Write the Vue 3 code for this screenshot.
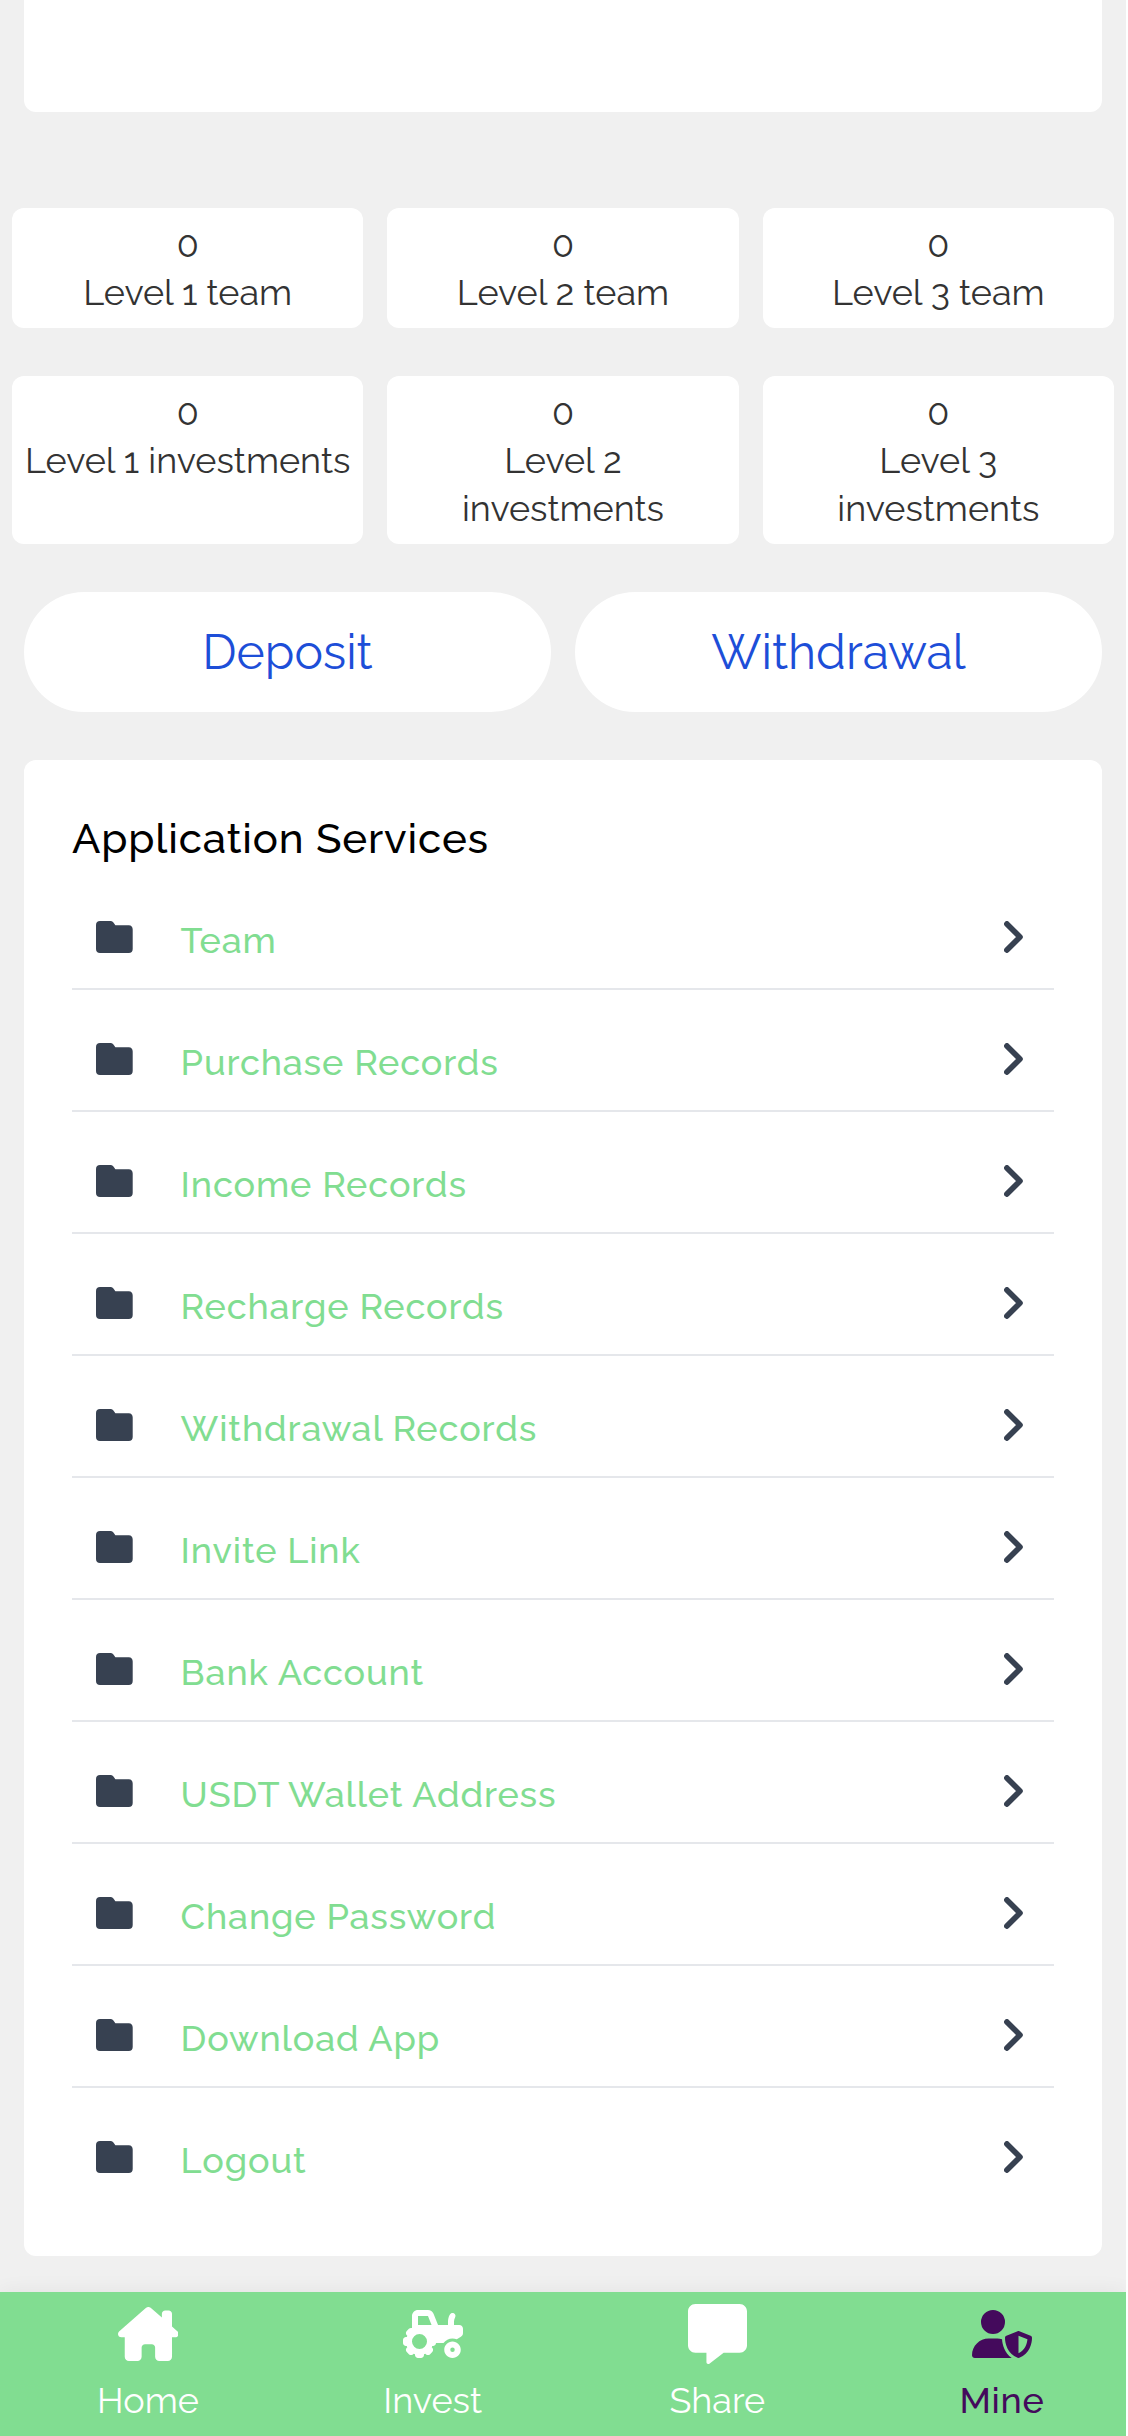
<script setup>
const stats = [
  [
    { value: 0, label: 'Level 1 team' },
    { value: 0, label: 'Level 2 team' },
    { value: 0, label: 'Level 3 team' },
  ],
  [
    { value: 0, label: 'Level 1 investments' },
    { value: 0, label: 'Level 2 investments' },
    { value: 0, label: 'Level 3 investments' },
  ],
]

const services = [
  'Team',
  'Purchase Records',
  'Income Records',
  'Recharge Records',
  'Withdrawal Records',
  'Invite Link',
  'Bank Account',
  'USDT Wallet Address',
  'Change Password',
  'Download App',
  'Logout',
]

const tabs = [
  {
    label: 'Home',
    box: '0 0 576 512',
    width: 60.75,
    height: 54,
    path: 'M543.8 287.6c17 0 32-14 32-32.1c1-9-3-17-11-24L512 185V64c0-17.7-14.3-32-32-32H448c-17.7 0-32 14.3-32 32v36.7L309.5 7c-6-5-14-7-21-7s-15 1-22 8L10 231.5c-7 7-10 15-10 24c0 18 14 32.1 32 32.1h32v69.7c-.1 .9-.1 1.8-.1 2.8V472c0 22.1 17.9 40 40 40h16c1.2 0 2.4-.1 3.6-.2c1.5 .1 3 .2 4.5 .2H160h24c22.1 0 40-17.9 40-40V448 384c0-17.7 14.3-32 32-32h64c17.7 0 32 14.3 32 32v64 24c0 22.1 17.9 40 40 40h24 32.5c1.4 0 2.8 0 4.2-.1c1.1 .1 2.2 .1 3.3 .1h16c22.1 0 40-17.9 40-40V455.8c.3-2.6 .5-5.3 .5-8.1l-.7-160.2h32z',
  },
  {
    label: 'Invest',
    box: '0 0 640 512',
    width: 60,
    height: 48,
    path: 'M96 64c0-35.3 28.7-64 64-64H266.3c26.2 0 49.7 15.9 59.4 40.2L373.7 160H480V126.2c0-24.8 5.8-49.3 16.9-71.6l2.5-5c7.9-15.8 27.1-22.2 42.9-14.3s22.2 27.1 14.3 42.9l-2.5 5c-6.7 13.3-10.1 28-10.1 42.9V160h56c22.1 0 40 17.9 40 40v45.4c0 16.5-8.5 31.9-22.6 40.7l-43.3 27.1c-14.2-5.9-29.8-9.2-46.1-9.2c-39.3 0-74.1 18.9-96 48H352c0 17.7-14.3 32-32 32h-8.2c-1.7 4.8-3.7 9.5-5.8 14.1l5.8 5.8c12.5 12.5 12.5 32.8 0 45.3l-22.6 22.6c-12.5 12.5-32.8 12.5-45.3 0l-5.8-5.8c-4.6 2.2-9.3 4.1-14.1 5.8V480c0 17.7-14.3 32-32 32H160c-17.7 0-32-14.3-32-32v-8.2c-4.8-1.7-9.5-3.7-14.1-5.8l-5.8 5.8c-12.5 12.5-32.8 12.5-45.3 0L40.2 449.1c-12.5-12.5-12.5-32.8 0-45.3l5.8-5.8c-2.2-4.6-4.1-9.3-5.8-14.1H32c-17.7 0-32-14.3-32-32V320c0-17.7 14.3-32 32-32h8.2c1.7-4.8 3.7-9.5 5.8-14.1l-5.8-5.8c-12.5-12.5-12.5-32.8 0-45.3l22.6-22.6c9-9 21.9-11.5 33.1-7.6V192 160 64zm170.3 0H160v96h32H304.7L266.3 64zM176 256a80 80 0 1 0 0 160 80 80 0 1 0 0-160zM528 448a24 24 0 1 0 0-48 24 24 0 1 0 0 48zm0 64c-48.6 0-88-39.4-88-88s39.4-88 88-88s88 39.4 88 88s-39.4 88-88 88z',
  },
  {
    label: 'Share',
    box: '0 0 512 512',
    width: 59,
    height: 60,
    path: 'M64 0C28.7 0 0 28.7 0 64V352c0 35.3 28.7 64 64 64h96v80c0 6.1 3.4 11.6 8.8 14.3s11.9 2.1 16.8-1.5L309.3 416H448c35.3 0 64-28.7 64-64V64c0-35.3-28.7-64-64-64H64z',
  },
  {
    label: 'Mine',
    box: '0 0 640 512',
    width: 60,
    height: 48,
    active: true,
    path: 'M224 256A128 128 0 1 0 224 0a128 128 0 1 0 0 256zm-45.7 48C79.8 304 0 383.8 0 482.3C0 498.7 13.3 512 29.7 512H418.3c1.8 0 3.5-.2 5.3-.5c-76.3-55.1-99.8-141-103.1-200.2c-16.1-4.8-33.1-7.3-50.7-7.3H178.3zm308.8-78.3l-120 48C358 277.4 352 286.2 352 296c0 63.3 25.9 168.8 134.8 214.2c5.9 2.5 12.6 2.5 18.5 0C614.1 464.8 640 359.3 640 296c0-9.8-6-18.6-15.1-22.3l-120-48c-5.7-2.3-12.1-2.3-17.8 0zM591.4 312c-3.9 50.7-27.2 116.7-95.4 149.7V273.8L591.4 312z',
  },
]
</script>

<template>
  <div class="page">
    <div class="summary-card"></div>

    <div class="stats">
      <div v-for="(row, i) in stats" :key="i" class="stats-row">
        <div v-for="item in row" :key="item.label" class="stat">
          <div>{{ item.value }}</div>
          <div>{{ item.label }}</div>
        </div>
      </div>
    </div>

    <div class="actions">
      <a class="action">Deposit</a>
      <a class="action">Withdrawal</a>
    </div>

    <section class="services">
      <h2 class="services-title">Application Services</h2>
      <ul class="list">
        <li v-for="name in services" :key="name" class="row">
          <svg class="folder" width="38" height="32" viewBox="0 0 38 32">
            <path d="M4 0H14.2C15.6 0 16.6.5 17.4 1.5L19.4 4.3H32.8C35.3 4.3 36.700 6 36.700 8.500V28C36.700 30.500 35.300 32 32.800 32H4C1.500 32 0 30.500 0 28V4C0 1.500 1.500 0 4 0Z" />
          </svg>
          <span class="row-label">{{ name }}</span>
          <svg class="chevron" width="20" height="32" viewBox="0 0 20 32">
            <path d="M2.900 2.900L16 16L2.900 29.100" />
          </svg>
        </li>
      </ul>
    </section>

    <nav class="tabbar">
      <a v-for="tab in tabs" :key="tab.label" class="tab" :class="{ active: tab.active }">
        <span class="tab-icon">
          <svg :width="tab.width" :height="tab.height" :viewBox="tab.box" preserveAspectRatio="none"><path :d="tab.path" /></svg>
        </span>
        <span>{{ tab.label }}</span>
      </a>
    </nav>
  </div>
</template>

<style>
body {
  margin: 0;
  background: #fff;
}
</style>

<style scoped>
.page {
  display: flex;
  flex-direction: column;
  width: 1126px;
  height: 2436px;
  overflow: hidden;
  background: #f0f0f0;
  color: #333;
  font-family: Raleway, Lato, sans-serif;
  font-size: 36px;
  line-height: 48px;
}

.summary-card {
  height: 112px;
  margin: 0 24px;
  border-radius: 0 0 12px 12px;
  background: #fff;
}

.stats {
  display: flex;
  flex-direction: column;
  gap: 48px;
  margin-top: 96px;
}

.stats-row {
  display: grid;
  grid-template-columns: repeat(3, 1fr);
  gap: 24px;
  padding: 0 12px;
}

.stat {
  padding: 12px;
  border-radius: 12px;
  background: #fff;
  text-align: center;
}

.actions {
  display: grid;
  grid-template-columns: 1fr 1fr;
  gap: 24px;
  margin: 48px 24px;
}

.action {
  border-radius: 60px;
  background: #fff;
  color: #1d4ed8;
  font-size: 48px;
  line-height: 120px;
  text-align: center;
}

.services {
  margin: 0 24px;
  padding: 48px;
  border-radius: 12px;
  background: #fff;
}

.services-title {
  box-sizing: border-box;
  height: 60px;
  margin: 0;
  padding-top: 1px;
  color: #000;
  font-size: 42px;
  font-weight: 500;
  line-height: 60px;
  letter-spacing: 0.02em;
}

.list {
  margin: 0;
  padding: 0;
  list-style: none;
}

.row {
  display: flex;
  align-items: center;
  box-sizing: border-box;
  height: 122px;
  padding: 0 30px 0 24px;
  border-bottom: 2px solid #e5e7eb;
}

.row:last-child {
  height: 120px;
  border-bottom: 0;
}

.folder {
  margin-top: 18px;
  fill: #374151;
}

.row-label {
  flex: 1;
  margin: 24px 0 0 46.6px;
  color: #81dd91;
  font-weight: 500;
  letter-spacing: 0.024em;
}

.chevron {
  margin-top: 18px;
  fill: none;
  stroke: #374151;
  stroke-width: 5.6;
  stroke-linecap: round;
  stroke-linejoin: round;
}

.tabbar {
  display: flex;
  justify-content: space-between;
  box-sizing: border-box;
  height: 144px;
  margin-top: auto;
  padding: 12px 64px 0 88px;
  background: #81dd91;
  box-shadow: 0 0 20px rgba(0, 0, 0, 0.06);
}

.tab {
  display: flex;
  flex-direction: column;
  align-items: center;
  width: 120px;
  color: #fff;
}

.tab-icon {
  display: flex;
  align-items: center;
  height: 60px;
  margin-bottom: 12px;
}

.tab svg {
  display: block;
  fill: currentColor;
}

.tab.active {
  color: #440a5c;
  font-weight: 500;
  letter-spacing: 0.02em;
}
</style>
